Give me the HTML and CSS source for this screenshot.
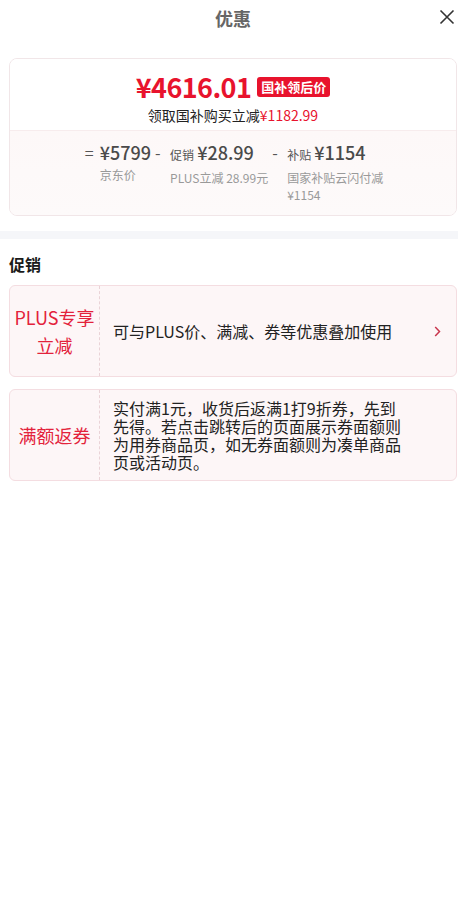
FILE: index.html
```html
<!DOCTYPE html>
<html lang="zh-CN">
<head>
    <meta charset="UTF-8">
    <meta name="viewport" content="width=device-width, initial-scale=1.0">
    <title>优惠</title>
    <link rel="stylesheet" href="styles.css">
</head>
<body>
    <div class="sheet">
        <!-- Top title bar -->
        <div class="title-bar">
            <span class="title">优惠</span>
            <span class="close">
                <svg width="16" height="16" viewBox="0 0 16 16"><path d="M1.5 1.5 L14.5 14.5 M14.5 1.5 L1.5 14.5" stroke="#333" stroke-width="1.6" fill="none"/></svg>
            </span>
        </div>

        <!-- Price breakdown card -->
        <div class="price-card">
            <div class="price-top">
                <div class="price-row">
                    <span class="price">¥4616.01</span>
                    <span class="badge">国补领后价</span>
                </div>
                <div class="price-sub">领取国补购买立减<span class="red">¥1182.99</span></div>
            </div>
            <div class="price-bottom">
                <div class="calc">
                    <div class="calc-col">
                        <span class="sign">=</span>
                        <div class="calc-item">
                            <div class="calc-val">¥5799</div>
                            <div class="calc-desc">京东价</div>
                        </div>
                    </div>
                    <div class="calc-col">
                        <span class="sign">-</span>
                        <div class="calc-item">
                            <div class="calc-val"><span class="calc-label">促销</span>¥28.99</div>
                            <div class="calc-desc">PLUS立减 28.99元</div>
                        </div>
                    </div>
                    <div class="calc-col">
                        <span class="sign">-</span>
                        <div class="calc-item">
                            <div class="calc-val"><span class="calc-label">补贴</span>¥1154</div>
                            <div class="calc-desc">国家补贴云闪付减 ¥1154</div>
                        </div>
                    </div>
                </div>
            </div>
        </div>

        <div class="band"></div>

        <!-- Promotions -->
        <div class="section-title">促销</div>

        <div class="promo">
            <div class="promo-tag">PLUS专享<br>立减</div>
            <div class="promo-text">可与PLUS价、满减、券等优惠叠加使用</div>
            <span class="promo-arrow">
                <svg width="7" height="11" viewBox="0 0 7 11"><path d="M1.2 1 L5.5 5.5 L1.2 10" stroke="#c8364d" stroke-width="1.5" fill="none"/></svg>
            </span>
        </div>

        <div class="promo">
            <div class="promo-tag">满额返券</div>
            <div class="promo-text multi">实付满1元，收货后返满1打9折券，先到先得。若点击跳转后的页面展示券面额则为用券商品页，如无券面额则为凑单商品页或活动页。</div>
        </div>
    </div>
</body>
</html>
```

FILE: styles.css
```css
html, body {
    margin: 0;
    overflow: hidden;
    background: #fff;
}

* {
    box-sizing: border-box;
}

body {
    font-family: "Noto Sans CJK SC", "Noto Sans", sans-serif;
    color: #222;
}

.sheet {
    width: 466px;
    height: 904px;
}

.title-bar {
    height: 35px;
    display: flex;
    align-items: center;
    justify-content: center;
    position: relative;
}

.title {
    font-size: 18px;
    font-weight: 700;
    color: #666;
}

.close {
    position: absolute;
    right: 11px;
    top: 9px;
    display: flex;
}

.price-card {
    margin: 23px 9px 0;
    border: 1px solid #f1e6e8;
    border-radius: 8px;
    overflow: hidden;
}

.price-top {
    padding: 13px 0 5px;
    text-align: center;
    background: #fff;
}

.price-row {
    height: 30px;
    display: flex;
    align-items: center;
    justify-content: center;
}

.price {
    font-size: 27px;
    font-weight: 700;
    color: #e8132d;
    letter-spacing: -0.6px;
    line-height: 30px;
}

.badge {
    margin-left: 6px;
    height: 20px;
    line-height: 20px;
    padding: 0 4px;
    font-size: 13px;
    font-weight: 700;
    color: #fff;
    background: #e8132d;
    border-radius: 3px;
}

.price-sub {
    margin-top: 3px;
    font-size: 14px;
    line-height: 20px;
    color: #222;
}

.red {
    color: #e8132d;
}

.price-bottom {
    border-top: 1px solid #f7eced;
    background: linear-gradient(to bottom, #fdf8f8, #fdfafa);
    padding: 11px 0 12px;
}

.calc {
    display: flex;
    justify-content: center;
    align-items: flex-start;
    gap: 4px;
    padding-left: 6px;
}

.calc-col {
    display: flex;
    align-items: flex-start;
}

.sign {
    width: 15px;
    font-size: 16px;
    line-height: 20px;
    color: #555;
}

.calc-item {
    max-width: 100px;
}

.calc-val {
    font-size: 18px;
    font-weight: 500;
    line-height: 20px;
    color: #4a4a4a;
    white-space: nowrap;
}

.calc-label {
    font-size: 12px;
    font-weight: 400;
    color: #555;
    margin-right: 3px;
}

.calc-desc {
    margin-top: 4px;
    font-size: 12px;
    line-height: 17px;
    color: #999;
}

.band {
    margin-top: 15px;
    height: 8px;
    background: #f5f6f9;
}

.section-title {
    margin: 13px 9px 9px;
    font-size: 16px;
    font-weight: 700;
    line-height: 24px;
    color: #1a1a1a;
}

.promo {
    margin: 0 9px 12px;
    height: 92px;
    display: flex;
    align-items: stretch;
    background: #fdf6f7;
    border: 1px solid #f4dde1;
    border-radius: 6px;
}

.promo-tag {
    width: 90px;
    flex-shrink: 0;
    display: flex;
    align-items: center;
    justify-content: center;
    text-align: center;
    font-size: 18px;
    line-height: 28px;
    color: #e3223b;
    border-right: 1px dashed #ead3d7;
}

.promo-text {
    flex: 1;
    display: flex;
    align-items: center;
    padding: 0 12px 0 13px;
    font-size: 16px;
    line-height: 18px;
    color: #222;
}

.promo-text.multi {
    padding-right: 50px;
}

.promo-arrow {
    display: flex;
    align-items: center;
    padding-right: 15px;
}
```
